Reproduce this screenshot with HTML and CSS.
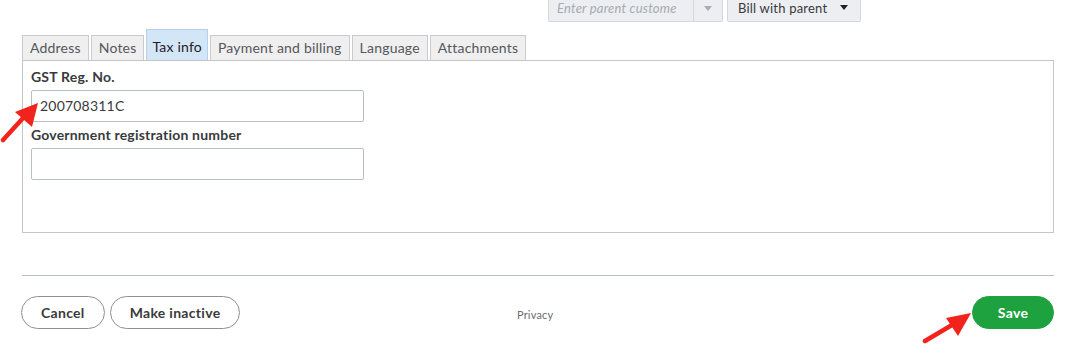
FILE: index.html
```html
<!DOCTYPE html>
<html lang="en">

<head>
    <meta charset="UTF-8">
    <meta name="viewport" content="width=device-width, initial-scale=1.0">
    <title>Customer - Tax info</title>
    <link rel="stylesheet" href="styles.css">
</head>

<body>
    <div class="page">
        <div class="parent-row">
            <div class="parent-input">
                <span class="placeholder">Enter parent custome</span>
                <span class="caret-box"><span class="caret light"></span></span>
            </div>
            <div class="bill-select">
                <span>Bill with parent</span>
                <span class="caret"></span>
            </div>
        </div>

        <ul class="tabs">
            <li class="tab">Address</li>
            <li class="tab">Notes</li>
            <li class="tab active">Tax info</li>
            <li class="tab">Payment and billing</li>
            <li class="tab">Language</li>
            <li class="tab">Attachments</li>
        </ul>

        <div class="panel">
            <label class="field-label">GST Reg. No.</label>
            <div class="field-input">200708311C</div>
            <label class="field-label">Government registration number</label>
            <div class="field-input"></div>
        </div>

        <div class="divider"></div>

        <div class="footer">
            <div class="footer-left">
                <button class="btn">Cancel</button>
                <button class="btn">Make inactive</button>
            </div>
            <a class="privacy">Privacy</a>
            <button class="btn btn-save">Save</button>
        </div>

        <!-- annotation arrows -->
        <svg class="arrow arrow-gst" width="40" height="44" viewBox="0 0 40 44">
            <line x1="3" y1="40" x2="24" y2="17" stroke="#f2221c" stroke-width="4.5" stroke-linecap="round" />
            <polygon points="38,3 32,27 15,12" fill="#f2221c" />
        </svg>
        <svg class="arrow arrow-save" width="52" height="36" viewBox="0 0 52 36">
            <line x1="3" y1="32" x2="30" y2="16" stroke="#f2221c" stroke-width="4.5" stroke-linecap="round" />
            <polygon points="49,4 36,27 24,9" fill="#f2221c" />
        </svg>
    </div>
</body>

</html>
```

FILE: styles.css
```css
body {
    margin: 0;
    font-family: Lato, "Open Sans", Arial, sans-serif;
    letter-spacing: 0.2px;
    color: #393a3d;
    background: #fff;
}

.page {
    position: relative;
    width: 1076px;
    height: 356px;
    overflow: hidden;
}

.parent-row {
    display: flex;
    gap: 4px;
    margin-left: 548px;
    height: 22px;
}

.parent-input {
    display: flex;
    width: 173px;
    border: 1px solid #d4d7dc;
    border-top: none;
    border-radius: 0 0 2px 2px;
    background: #eceef1;
}

.placeholder {
    flex: 1;
    padding-left: 8px;
    font-size: 13px;
    font-style: italic;
    color: #a8abb0;
    line-height: 17px;
}

.caret-box {
    width: 28px;
    border-left: 1px solid #d4d7dc;
    display: flex;
    align-items: center;
    justify-content: center;
    padding-bottom: 5px;
}

.bill-select {
    display: flex;
    justify-content: space-between;
    width: 134px;
    padding: 0 12px 0 10px;
    box-sizing: border-box;
    border: 1px solid #d4d7dc;
    border-top: none;
    border-radius: 0 0 2px 2px;
    background: #eceef1;
    font-size: 13px;
    color: #393a3d;
    line-height: 17px;
}

.caret {
    width: 0;
    height: 0;
    margin-top: 5px;
    border-left: 4px solid transparent;
    border-right: 4px solid transparent;
    border-top: 5px solid #1f2024;
}

.caret.light {
    margin-top: 0;
    border-top-color: #a8abb0;
}

.tabs {
    list-style: none;
    margin: 7px 0 0 22px;
    padding: 0;
    display: flex;
    align-items: flex-end;
    gap: 2px;
    height: 31px;
}

.tab {
    height: 24px;
    padding: 0 7px;
    border: 1px solid #c9cbce;
    border-bottom: none;
    background: #efefef;
    font-size: 14px;
    letter-spacing: 0.2px;
    line-height: 24px;
    color: #55575d;
}

.tab.active {
    height: 30px;
    line-height: 34px;
    padding: 0 5px;
    background: #d3e6f8;
    border-color: #b7d0ea;
    color: #1f2024;
}

.panel {
    margin: 0 22px 0 22px;
    height: 173px;
    border: 1px solid #c4c6ca;
    padding: 7px 8px 0 8px;
    box-sizing: border-box;
}

.field-label {
    display: block;
    font-size: 14px;
    font-weight: 700;
    line-height: 18px;
    color: #393a3d;
    margin-bottom: 4px;
}

.field-input {
    width: 333px;
    height: 32px;
    box-sizing: border-box;
    border: 1px solid #babec5;
    border-radius: 2px;
    padding-left: 8px;
    font-size: 14px;
    line-height: 30px;
    color: #393a3d;
    margin-bottom: 4px;
}

.divider {
    margin: 42px 22px 0 22px;
    border-top: 1px solid #babec5;
}

.footer {
    display: flex;
    align-items: center;
    justify-content: space-between;
    margin: 20px 22px 0 21px;
}

.footer-left {
    display: flex;
    gap: 5px;
}

.btn {
    height: 33px;
    padding: 0 19px;
    border: 1px solid #8d9096;
    border-radius: 17px;
    background: #fff;
    font-family: inherit;
    font-size: 14px;
    font-weight: 700;
    letter-spacing: 0.3px;
    color: #393a3d;
}

.privacy {
    font-size: 11px;
    color: #6b6c72;
    margin: 4px 142px 0 0;
}

.btn-save {
    width: 82px;
    background: #1ea13f;
    border-color: #1ea13f;
    color: #fff;
}

.arrow {
    position: absolute;
}

.arrow-gst {
    left: 0;
    top: 100px;
}

.arrow-save {
    left: 922px;
    top: 309px;
}
```
